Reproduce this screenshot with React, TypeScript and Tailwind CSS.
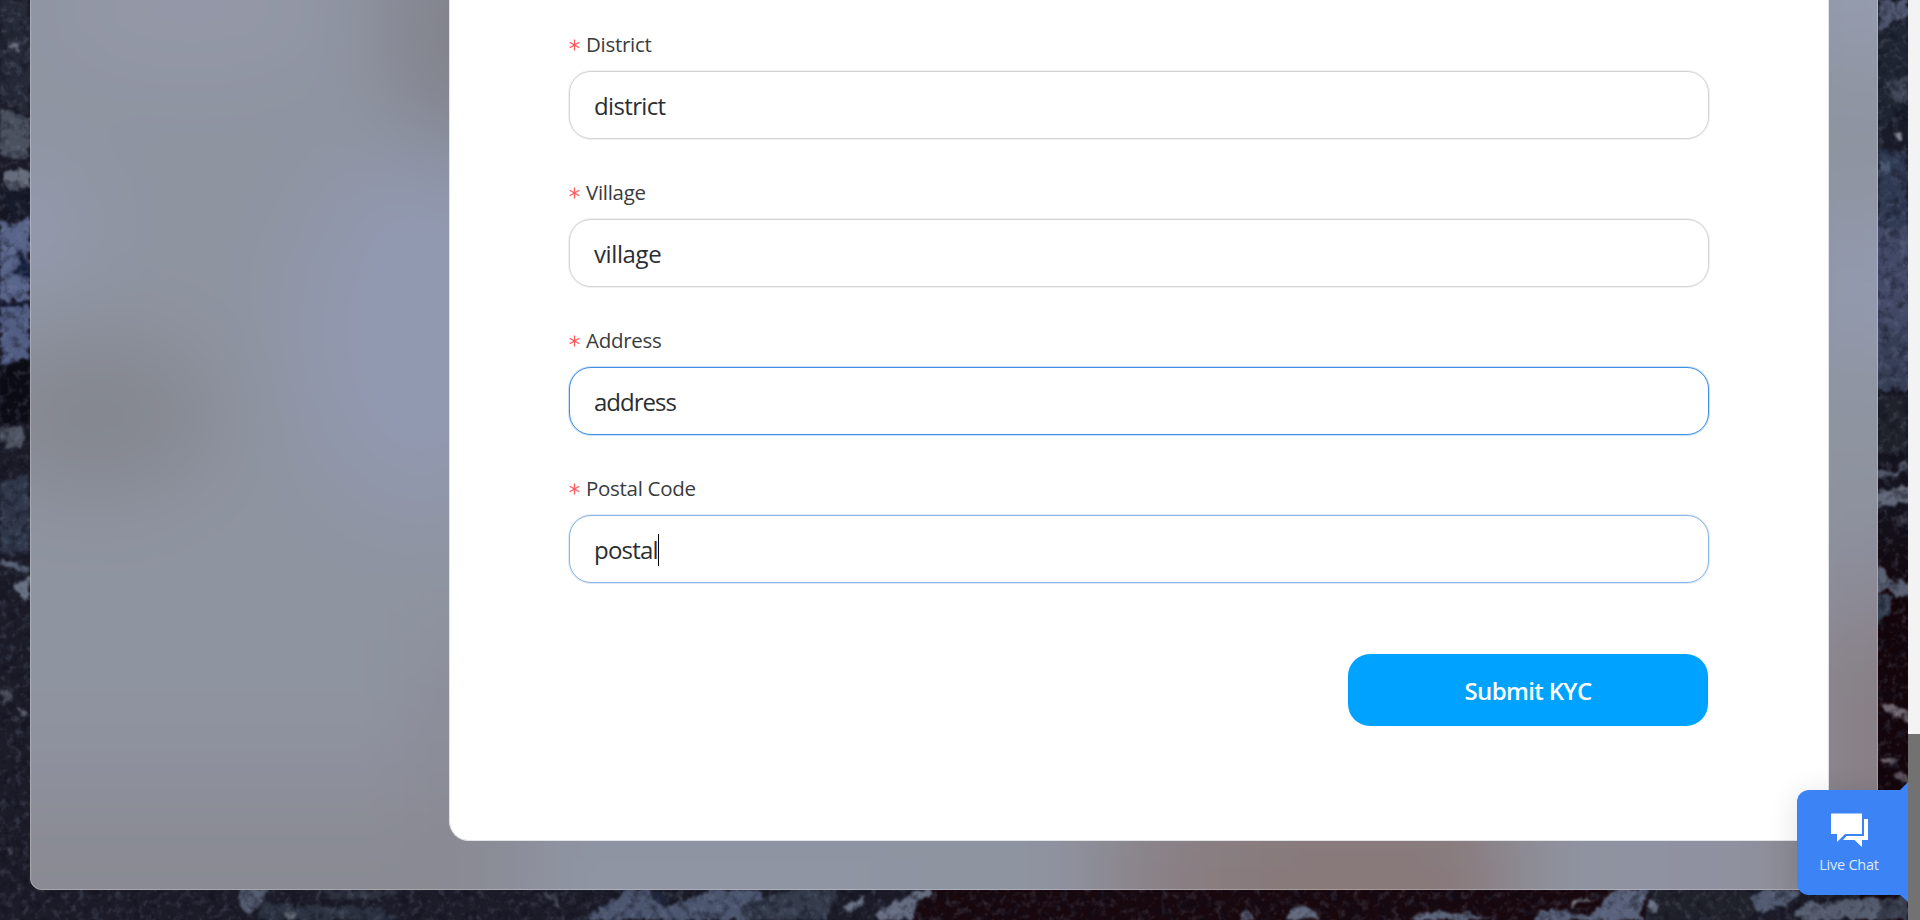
import React from 'react';

type Blob = { d: string; c: string };

const leftStones: Blob[] = [
  { d: 'M0 0H30V115L12 108L0 100Z', c: '#262a37' },
  { d: 'M0 108L14 112L30 118V160L12 158L0 154Z', c: '#4b515f' },
  { d: 'M10 43L20 46L18 51L11 48Z', c: '#6c6f7c' },
  { d: 'M4 172L18 168L30 174V186L14 190L3 183Z', c: '#666c7b' },
  { d: 'M0 190H30V215L14 222L4 210Z', c: '#171a28' },
  { d: 'M0 220L14 226L30 216V300H0Z', c: '#59648a' },
  { d: 'M18 248L25 258L30 268V278L22 276L8 272L20 266Z', c: '#16203d' },
  { d: 'M0 300L14 302L30 300V305L14 308L0 306Z', c: '#151b34' },
  { d: 'M0 306H30V358L0 366Z', c: '#525d83' },
  { d: 'M0 368L30 358V424H0Z', c: '#0b0b14' },
  { d: 'M0 426L24 428L22 446L6 448L0 440Z', c: '#4f5461' },
  { d: 'M0 484L30 474V550L14 556L0 550Z', c: '#2f3749' },
  { d: 'M0 560L14 562L30 568V573L0 566Z', c: '#555f73' },
  { d: 'M12 586L30 578V602L24 600Z', c: '#697183' },
  { d: 'M0 694L10 690L12 698L2 702Z', c: '#50535e' },
  { d: 'M15 708L28 714L22 716Z', c: '#595d69' },
  { d: 'M8 848L16 850L12 856Z', c: '#4d505c' },
];

const bottomStones: Blob[] = [
  { d: 'M264 904L380 908L400 920H256Z', c: '#2d3342' },
  { d: 'M240 888L268 890L262 900L252 914L240 906Z', c: '#535b6f' },
  { d: 'M286 911L296 910L294 920H285Z', c: '#646a77' },
  { d: 'M320 890H400L390 898L330 900Z', c: '#2c313d' },
  { d: 'M545 890L556 896L560 908L554 906Z', c: '#4f5362' },
  { d: 'M588 920L600 905L616 900L622 890H650L664 906L700 896L712 890H760L768 906L744 920Z', c: '#4c566f' },
  { d: 'M650 892H668V904L656 906Z', c: '#20263a' },
  { d: 'M742 906L790 890H838L826 920H742Z', c: '#343b4b' },
  { d: 'M843 908L866 896L862 904L850 912Z', c: '#697183' },
  { d: 'M872 912L900 900L918 890H932L918 902L910 920H880Z', c: '#666d81' },
  { d: 'M1240 916L1248 908L1256 920H1240Z', c: '#555b70' },
  { d: 'M1288 912L1298 906L1314 908L1320 920H1286Z', c: '#636a7e' },
  { d: 'M1414 916L1440 912L1474 915L1494 920H1408Z', c: '#5c6479' },
  { d: 'M1537 912L1562 910L1590 916L1604 903L1612 890H1650L1640 912L1642 920H1536Z', c: '#59627a' },
  { d: 'M1568 904L1576 899L1594 901L1592 903L1578 903L1572 908Z', c: '#74747f' },
  { d: 'M1652 890H1745L1766 900L1744 920H1654Z', c: '#20222b' },
  { d: 'M1648 900L1654 898L1658 906L1656 915L1650 912Z', c: '#70768a' },
  { d: 'M1750 898L1766 890H1800L1788 904L1758 912Z', c: '#515a70' },
  { d: 'M1792 914L1806 904L1850 900L1880 895L1876 920H1800Z', c: '#575f70' },
  { d: 'M1880 900L1908 896V920H1876Z', c: '#3b4050' },
];

const rightStones: Blob[] = [
  { d: 'M1878 0H1908V14L1890 24L1878 32Z', c: '#4d556d' },
  { d: 'M1878 33L1908 18V100L1878 138Z', c: '#202532' },
  { d: 'M1886 80L1908 76V106L1894 98Z', c: '#3e4454' },
  { d: 'M1893 133L1902 132L1900 142Z', c: '#858895' },
  { d: 'M1878 148L1908 154V228H1878Z', c: '#2f3951' },
  { d: 'M1878 160L1890 162L1888 173L1878 170Z', c: '#485670' },
  { d: 'M1870 230L1915 226V390L1870 384Z', c: '#424966' },
  { d: 'M1878 320L1908 340V390H1878Z', c: '#373f57' },
  { d: 'M1878 394H1908V450L1890 456L1878 450Z', c: '#1f222b' },
  { d: 'M1878 470L1894 470L1908 458V468L1894 476L1878 480Z', c: '#505566' },
  { d: 'M1870 494L1915 484V502L1870 507Z', c: '#626777' },
  { d: 'M1896 518L1908 508V525L1898 526Z', c: '#2f2b38' },
  { d: 'M1870 564L1886 570L1886 580L1915 584V594L1898 598L1888 590L1870 592Z', c: '#596172' },
  { d: 'M1870 590L1892 598L1890 612L1870 632Z', c: '#343c4c' },
  { d: 'M1882 704L1888 703L1912 715V723L1884 711Z', c: '#70666f' },
  { d: 'M1880 761L1886 757L1898 759L1892 764L1882 765Z', c: '#6a6067' },
  { d: 'M1895 772L1904 773L1912 780V786L1898 778Z', c: '#60555e' },
];

function RockBackdrop() {
  return (
    <svg className="absolute inset-0 h-full w-full" viewBox="0 0 1908 920" aria-hidden="true">
      <defs>
        <filter id="rough" x="-20" y="-20" width="1950" height="960" filterUnits="userSpaceOnUse" colorInterpolationFilters="sRGB">
          <feTurbulence type="fractalNoise" baseFrequency="0.12" numOctaves="3" seed="4" result="n" />
          <feDisplacementMap in="SourceGraphic" in2="n" scale="11" xChannelSelector="R" yChannelSelector="G" />
          <feGaussianBlur stdDeviation="1.3" />
        </filter>
        <filter id="light" x="0" y="0" width="1908" height="920" filterUnits="userSpaceOnUse" colorInterpolationFilters="sRGB">
          <feTurbulence type="fractalNoise" baseFrequency="0.13" numOctaves="4" seed="9" />
          <feColorMatrix values="0 0 0 0 0.5  0 0 0 0 0.54  0 0 0 0 0.64  3 0 0 0 -1.45" />
        </filter>
        <filter id="dark" x="0" y="0" width="1908" height="920" filterUnits="userSpaceOnUse" colorInterpolationFilters="sRGB">
          <feTurbulence type="fractalNoise" baseFrequency="0.1" numOctaves="4" seed="21" />
          <feColorMatrix values="0 0 0 0 0.05  0 0 0 0 0.05  0 0 0 0 0.1  3 0 0 0 -1.4" />
        </filter>
        <linearGradient id="edge" x1="0" x2="0" y1="0" y2="1">
          <stop offset="0" stopColor="#1b1f2c" />
          <stop offset="0.55" stopColor="#14131e" />
          <stop offset="0.65" stopColor="#130409" />
          <stop offset="1" stopColor="#15070d" />
        </linearGradient>
      </defs>
      <rect width="1908" height="920" fill="#1b1c28" />
      <rect x="1860" width="48" height="920" fill="url(#edge)" />
      <g filter="url(#rough)">
        <path d="M932 880H1650L1642 935H904Z" fill="#18080e" />
        {[...leftStones, ...bottomStones, ...rightStones].map((s) => (
          <path key={s.d} d={s.d} fill={s.c} />
        ))}
      </g>
      <rect width="1908" height="920" filter="url(#light)" opacity="0.22" />
      <rect width="1908" height="920" filter="url(#dark)" opacity="0.4" />
    </svg>
  );
}

function PanelHaze() {
  return (
    <svg className="absolute inset-0 h-full w-full" viewBox="30 0 1848 890" preserveAspectRatio="none" aria-hidden="true">
      <defs>
        <filter id="soft" x="-400" y="-400" width="2800" height="1800" filterUnits="userSpaceOnUse" colorInterpolationFilters="sRGB">
          <feGaussianBlur stdDeviation="46" />
        </filter>
      </defs>
      <g filter="url(#soft)">
        <rect x="-300" y="-300" width="2500" height="1500" fill="#8f94a1" />
        <ellipse cx="190" cy="10" rx="150" ry="60" fill="#9498a8" />
        <ellipse cx="470" cy="30" rx="75" ry="120" fill="#80818a" />
        <ellipse cx="30" cy="230" rx="50" ry="80" fill="#949aaf" />
        <ellipse cx="95" cy="415" rx="120" ry="80" fill="#84878f" />
        <ellipse cx="420" cy="330" rx="120" ry="180" fill="#9199b1" />
        <rect x="-160" y="750" width="680" height="80" fill="#8d8f9b" />
        <rect x="-160" y="820" width="680" height="300" fill="#898a92" />
        <rect x="440" y="640" width="50" height="260" fill="#878790" />
        <rect x="540" y="860" width="330" height="210" fill="#9095a5" />
        <rect x="1110" y="780" width="160" height="300" fill="#897f83" />
        <rect x="1230" y="780" width="280" height="300" fill="#88797a" />
        <rect x="1620" y="780" width="130" height="300" fill="#8f91a0" />
        <rect x="1800" y="-160" width="240" height="210" fill="#959db0" />
        <rect x="1800" y="230" width="240" height="110" fill="#939bb1" />
        <rect x="1800" y="510" width="240" height="110" fill="#8c8d9a" />
        <rect x="1800" y="620" width="240" height="450" fill="#887f85" />
      </g>
    </svg>
  );
}

type FieldProps = {
  label: string;
  value: string;
  valueClass: string;
  frame?: string;
  caret?: boolean;
};

function Field({ label, value, valueClass, frame = 'border-[#d4d4d4] ring-[#f1f1f1]', caret = false }: FieldProps) {
  return (
    <div className="flex h-[148px] flex-col">
      <div className="flex h-[51px] items-center gap-[6px] pb-[2px] text-[20.5px] tracking-[-0.3px] text-[#3a3b3d]">
        <svg className="h-[12px] w-[11px]" viewBox="0 0 11 12" stroke="#ff5a5d" strokeWidth="1.3" aria-hidden="true">
          <path d="M5.5 0.5V11.5M0.7 3.2L10.3 8.8M10.3 3.2L0.7 8.8" />
        </svg>
        <span>{label}</span>
      </div>
      <div className={`flex h-[68px] items-center rounded-[22px] border bg-white pt-[2px] pl-[24px] text-[24px] text-[#2a2e32] ring-1 ${frame}`}>
        <span className={valueClass}>{value}</span>
        {caret && <span className="h-[32px] w-px bg-black" />}
      </div>
    </div>
  );
}

function LiveChat() {
  return (
    <div className="absolute top-[790px] right-0 flex h-[105px] w-[111px] flex-col items-center rounded-l-[12px] bg-[#3c83f6] shadow-[0_4px_30px_rgba(0,0,0,0.12)]">
      <svg className="absolute -top-[8px] right-0 h-[120px] w-[8px]" viewBox="0 0 8 120" fill="#3c83f6" aria-hidden="true">
        <path d="M0 8L8 0V8ZM0 113H8V120Z" />
      </svg>
      <svg className="mt-[23px] mr-[7px] h-[35px] w-[37px]" viewBox="0 0 37 35" fill="#fff" aria-hidden="true">
        <path d="M0 0.5H31V21H14L6 29V21H0Z" />
        <path d="M33 6H37V27H31V34L23.5 27H12L15.5 23H33Z" />
      </svg>
      <span className="mt-[7px] mr-[7px] text-[14.5px] leading-[20px] tracking-[-0.25px] text-[#dfe9fb]">Live Chat</span>
    </div>
  );
}

export default function App() {
  return (
    <div className="flex h-[920px] w-[1920px] overflow-hidden font-['Open_Sans','Noto_Sans',sans-serif]">
      <main className="relative w-[1908px] overflow-hidden px-[30px] pb-[30px]">
        <RockBackdrop />
        <section className="relative flex h-[890px] justify-end overflow-hidden rounded-b-[12px] pr-[49px]">
          <PanelHaze />
          <div className="relative h-[841px] w-[1380px] rounded-b-[20px] border-x border-b border-[#e3e4e8] bg-white pt-[20px] pr-[119px] pl-[119px]">
            <Field label="District" value="district" valueClass="tracking-[-0.65px]" />
            <Field label="Village" value="village" valueClass="tracking-[-0.4px]" />
            <Field
              label="Address"
              value="address"
              valueClass="tracking-[-1px]"
              frame="border-[#3f8fe4] ring-[#c9e0f8]"
            />
            <Field
              label="Postal Code"
              value="postal"
              valueClass="tracking-[-0.8px]"
              frame="border-[#89b4e4] ring-[#e0ebf8]"
              caret
            />
            <div className="mt-[42px] flex justify-end pr-px">
              <button className="h-[72px] w-[360px] rounded-[22px] bg-[#00a2ff] pt-px text-[24px] font-semibold tracking-[-0.65px] text-white">
                Submit KYC
              </button>
            </div>
          </div>
          <div className="pointer-events-none absolute inset-0 rounded-b-[12px] border-x border-b border-white/25" />
        </section>
        <LiveChat />
      </main>
      <aside className="flex w-[12px] flex-col bg-[#f3f3f3]">
        <div className="mt-auto h-[186px] bg-[#727272]" />
      </aside>
    </div>
  );
}
